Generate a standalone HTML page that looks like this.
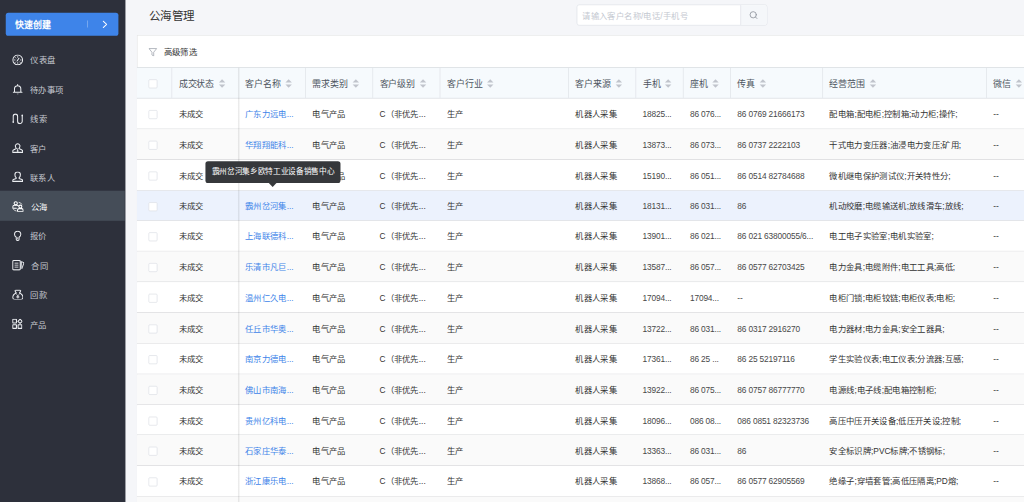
<!DOCTYPE html><html lang="zh-CN"><head><meta charset="utf-8"><title>公海管理</title><style>
*{box-sizing:border-box;margin:0;padding:0}
html,body{width:1024px;height:502px;overflow:hidden;background:#f5f6f9}
body{font-family:"Liberation Sans",sans-serif;font-size:13px;color:#333;position:relative}
#app{position:absolute;left:0;top:0;width:1600px;height:786px;transform:scale(0.64);transform-origin:0 0;background:#f5f6f9;overflow:hidden}
.sb{position:absolute;left:0;top:0;width:196px;height:786px;background:#2d303b}
.qc{position:absolute;left:9.4px;top:19.8px;width:175.400px;height:36.300px;border-radius:4px;background:#3e84e9;color:#fff;font-size:14px;font-weight:bold;line-height:36px;padding-left:13.500px;white-space:nowrap}
.qc i{position:absolute;left:127px;top:12.500px;width:1px;height:11px;background:rgba(255,255,255,.45)}
.qc svg{position:absolute;left:150.500px;top:12px}
.mi{position:absolute;left:0;width:195px;height:46.400px;color:#c6c9d0;font-size:13px;white-space:nowrap}
.mi.on{background:#454d58;color:#fff}
.mi .ic{position:absolute;left:0;top:1.300px;height:46.200px;display:flex;align-items:center;color:#eceef2}
.mi.on .ic{color:#fff}
.mi .tx{position:absolute;top:0;line-height:52.200px;height:46.200px}
.ttl{position:absolute;left:232.600px;top:0;height:52px;line-height:51.500px;font-size:18px;color:#333;white-space:nowrap}
.srch{position:absolute;left:900.600px;top:7.400px;width:298.600px;height:32.200px;border:1px solid #dcdfe6;border-radius:4px;background:#fff;overflow:hidden}
.srch .ph{position:absolute;left:8px;top:0;line-height:34px;font-size:13px;color:#c5c9d1;letter-spacing:.150px;white-space:nowrap}
.srch .btn{position:absolute;right:0;top:0;width:41.500px;height:30.200px;background:#f5f7fa;border-left:1px solid #dcdfe6}
.srch .btn svg{position:absolute;left:12.500px;top:8px}
.card{position:absolute;left:214.0px;top:55px;width:1420px;height:760px;background:#fff;border:1px solid #e6e6e6}
.flt{position:absolute;left:17.400px;top:0;height:49px;line-height:51.600px;font-size:13px;color:#333;white-space:nowrap}
.flt svg{position:absolute;left:0;top:18.600px}
.flt span{position:absolute;left:23.400px;top:0}
.tbl{position:absolute;left:214.0px;top:105.3px;width:1420px}
.tr{position:absolute;left:0;width:1420px;height:47.86px;background:#fff;border-bottom:1px solid #d3d4d7}
.tr.alt{background:#fafafa}
.tr.hov{background:#ecf2fd}
.th{position:absolute;left:0;top:0;width:1420px;height:48.64px;background:#f6fafd;border-top:1px solid #d3d7dc;border-bottom:1px solid #bcc1c8}
.c{position:absolute;top:0;height:100%;padding-left:10px;white-space:nowrap;overflow:hidden;line-height:50px}
.th .c{font-size:14px;color:#4d5560;line-height:51.400px;border-right:1px solid #dde1e7}
.c a{color:#3e84e9;text-decoration:none}
.c.n{letter-spacing:-.220px;color:#484848}
.cb{position:absolute;left:18px;width:14px;height:14px;border:1px solid #d9dce3;border-radius:2px;background:#fff}
.srt{display:inline-block;position:relative;width:10px;height:14px;margin-left:7px;vertical-align:middle;top:-1.500px}
.srt:before,.srt:after{content:"";position:absolute;left:0;border:5px solid transparent}
.srt:before{top:-5.200px;border-bottom-color:#c0c4cc}
.srt:after{top:7.500px;border-top-color:#c0c4cc}
.fx{position:absolute;left:157px;top:1px;width:4px;height:700px;background:linear-gradient(90deg,rgba(0,0,0,0),rgba(0,0,0,.085) 45%,rgba(0,0,0,.085) 55%,rgba(0,0,0,0))}
.tip{position:absolute;left:320.800px;top:252.400px;width:211.400px;height:33.200px;background:#36383b;border-radius:4px;color:#fff;font-size:12px;line-height:33.500px;text-align:center;white-space:nowrap}
.tip:after{content:"";position:absolute;left:99.500px;bottom:-6px;border:6px solid transparent;border-bottom-width:0;border-top-color:#36383b}
</style></head><body><div id="app">
<div class="ttl">公海管理</div>
<div class="srch"><div class="ph">请输入客户名称/电话/手机号</div><div class="btn"><svg viewBox="0 0 15 15" width="15" height="15" fill="none" stroke="#8b9099" stroke-width="1.250" stroke-linecap="round"><circle cx="6.900" cy="7.100" r="4.900"/><path d="M10.600 10.800 12.800 13"/></svg></div></div>
<div class="card"><div class="flt"><svg viewBox="0 0 14 14" width="13.600" height="13.600" fill="none" stroke="#9da2ab" stroke-width="1.200" stroke-linejoin="round"><path d="M.8.900h12.400L8.400 6.800v6.200l-2.800-1.800V6.800z"/></svg><span>高级筛选</span></div></div>
<div class="tbl">
<div class="th">
<div class="c" style="left:0px;width:55px"><div class="cb" style="top:17.400px"></div></div>
<div class="c" style="left:55px;width:104px;border-right:0">成交状态<span class="srt"></span></div>
<div class="c" style="left:159px;width:105px">客户名称<span class="srt"></span></div>
<div class="c" style="left:264px;width:105px">需求类别<span class="srt"></span></div>
<div class="c" style="left:369px;width:105px">客户级别<span class="srt"></span></div>
<div class="c" style="left:474px;width:201px">客户行业<span class="srt"></span></div>
<div class="c" style="left:675px;width:105px">客户来源<span class="srt"></span></div>
<div class="c" style="left:780px;width:74px">手机<span class="srt"></span></div>
<div class="c" style="left:854px;width:74px">座机<span class="srt"></span></div>
<div class="c" style="left:928px;width:144px">传真<span class="srt"></span></div>
<div class="c" style="left:1072px;width:256px">经营范围<span class="srt"></span></div>
<div class="c" style="left:1328px;width:105px">微信<span class="srt"></span></div>
</div>
<div class="tr" style="top:48.64px">
<div class="c" style="left:0px;width:55px"><div class="cb" style="top:18px"></div></div>
<div class="c" style="left:55px;width:104px">未成交</div>
<div class="c" style="left:159px;width:105px"><a>广东力远电...</a></div>
<div class="c" style="left:264px;width:105px">电气产品</div>
<div class="c" style="left:369px;width:105px">C（非优先...</div>
<div class="c" style="left:474px;width:201px">生产</div>
<div class="c" style="left:675px;width:105px">机器人采集</div>
<div class="c n" style="left:780px;width:74px">18825...</div>
<div class="c n" style="left:854px;width:74px">86 076...</div>
<div class="c n" style="left:928px;width:144px">86 0769 21666173</div>
<div class="c" style="left:1072px;width:256px">配电箱;配电柜;控制箱;动力柜;操作;</div>
<div class="c" style="left:1328px;width:105px">--</div>
</div>
<div class="tr alt" style="top:96.50px">
<div class="c" style="left:0px;width:55px"><div class="cb" style="top:18px"></div></div>
<div class="c" style="left:55px;width:104px">未成交</div>
<div class="c" style="left:159px;width:105px"><a>华翔翔能科...</a></div>
<div class="c" style="left:264px;width:105px">电气产品</div>
<div class="c" style="left:369px;width:105px">C（非优先...</div>
<div class="c" style="left:474px;width:201px">生产</div>
<div class="c" style="left:675px;width:105px">机器人采集</div>
<div class="c n" style="left:780px;width:74px">13873...</div>
<div class="c n" style="left:854px;width:74px">86 073...</div>
<div class="c n" style="left:928px;width:144px">86 0737 2222103</div>
<div class="c" style="left:1072px;width:256px">干式电力变压器;油浸电力变压;矿用;</div>
<div class="c" style="left:1328px;width:105px">--</div>
</div>
<div class="tr" style="top:144.36px">
<div class="c" style="left:0px;width:55px"><div class="cb" style="top:18px"></div></div>
<div class="c" style="left:55px;width:104px">未成交</div>
<div class="c" style="left:159px;width:105px"><a>扬州华电电...</a></div>
<div class="c" style="left:264px;width:105px">电气产品</div>
<div class="c" style="left:369px;width:105px">C（非优先...</div>
<div class="c" style="left:474px;width:201px">生产</div>
<div class="c" style="left:675px;width:105px">机器人采集</div>
<div class="c n" style="left:780px;width:74px">15190...</div>
<div class="c n" style="left:854px;width:74px">86 051...</div>
<div class="c n" style="left:928px;width:144px">86 0514 82784688</div>
<div class="c" style="left:1072px;width:256px">微机继电保护测试仪;开关特性分;</div>
<div class="c" style="left:1328px;width:105px">--</div>
</div>
<div class="tr hov" style="top:192.22px">
<div class="c" style="left:0px;width:55px"><div class="cb" style="top:18px"></div></div>
<div class="c" style="left:55px;width:104px">未成交</div>
<div class="c" style="left:159px;width:105px"><a>霸州岔河集...</a></div>
<div class="c" style="left:264px;width:105px">电气产品</div>
<div class="c" style="left:369px;width:105px">C（非优先...</div>
<div class="c" style="left:474px;width:201px">生产</div>
<div class="c" style="left:675px;width:105px">机器人采集</div>
<div class="c n" style="left:780px;width:74px">18131...</div>
<div class="c n" style="left:854px;width:74px">86 031...</div>
<div class="c n" style="left:928px;width:144px">86</div>
<div class="c" style="left:1072px;width:256px">机动绞磨;电缆输送机;放线滑车;放线;</div>
<div class="c" style="left:1328px;width:105px">--</div>
</div>
<div class="tr" style="top:240.08px">
<div class="c" style="left:0px;width:55px"><div class="cb" style="top:18px"></div></div>
<div class="c" style="left:55px;width:104px">未成交</div>
<div class="c" style="left:159px;width:105px"><a>上海联德科...</a></div>
<div class="c" style="left:264px;width:105px">电气产品</div>
<div class="c" style="left:369px;width:105px">C（非优先...</div>
<div class="c" style="left:474px;width:201px">生产</div>
<div class="c" style="left:675px;width:105px">机器人采集</div>
<div class="c n" style="left:780px;width:74px">13901...</div>
<div class="c n" style="left:854px;width:74px">86 021...</div>
<div class="c n" style="left:928px;width:144px">86 021 63800055/6...</div>
<div class="c" style="left:1072px;width:256px">电工电子实验室;电机实验室;</div>
<div class="c" style="left:1328px;width:105px">--</div>
</div>
<div class="tr alt" style="top:287.94px">
<div class="c" style="left:0px;width:55px"><div class="cb" style="top:18px"></div></div>
<div class="c" style="left:55px;width:104px">未成交</div>
<div class="c" style="left:159px;width:105px"><a>乐清市凡巨...</a></div>
<div class="c" style="left:264px;width:105px">电气产品</div>
<div class="c" style="left:369px;width:105px">C（非优先...</div>
<div class="c" style="left:474px;width:201px">生产</div>
<div class="c" style="left:675px;width:105px">机器人采集</div>
<div class="c n" style="left:780px;width:74px">13587...</div>
<div class="c n" style="left:854px;width:74px">86 057...</div>
<div class="c n" style="left:928px;width:144px">86 0577 62703425</div>
<div class="c" style="left:1072px;width:256px">电力金具;电缆附件;电工工具;高低;</div>
<div class="c" style="left:1328px;width:105px">--</div>
</div>
<div class="tr" style="top:335.80px">
<div class="c" style="left:0px;width:55px"><div class="cb" style="top:18px"></div></div>
<div class="c" style="left:55px;width:104px">未成交</div>
<div class="c" style="left:159px;width:105px"><a>温州仁久电...</a></div>
<div class="c" style="left:264px;width:105px">电气产品</div>
<div class="c" style="left:369px;width:105px">C（非优先...</div>
<div class="c" style="left:474px;width:201px">生产</div>
<div class="c" style="left:675px;width:105px">机器人采集</div>
<div class="c n" style="left:780px;width:74px">17094...</div>
<div class="c n" style="left:854px;width:74px">17094...</div>
<div class="c n" style="left:928px;width:144px">--</div>
<div class="c" style="left:1072px;width:256px">电柜门锁;电柜铰链;电柜仪表;电柜;</div>
<div class="c" style="left:1328px;width:105px">--</div>
</div>
<div class="tr alt" style="top:383.66px">
<div class="c" style="left:0px;width:55px"><div class="cb" style="top:18px"></div></div>
<div class="c" style="left:55px;width:104px">未成交</div>
<div class="c" style="left:159px;width:105px"><a>任丘市华奥...</a></div>
<div class="c" style="left:264px;width:105px">电气产品</div>
<div class="c" style="left:369px;width:105px">C（非优先...</div>
<div class="c" style="left:474px;width:201px">生产</div>
<div class="c" style="left:675px;width:105px">机器人采集</div>
<div class="c n" style="left:780px;width:74px">13722...</div>
<div class="c n" style="left:854px;width:74px">86 031...</div>
<div class="c n" style="left:928px;width:144px">86 0317 2916270</div>
<div class="c" style="left:1072px;width:256px">电力器材;电力金具;安全工器具;</div>
<div class="c" style="left:1328px;width:105px">--</div>
</div>
<div class="tr" style="top:431.52px">
<div class="c" style="left:0px;width:55px"><div class="cb" style="top:18px"></div></div>
<div class="c" style="left:55px;width:104px">未成交</div>
<div class="c" style="left:159px;width:105px"><a>南京力德电...</a></div>
<div class="c" style="left:264px;width:105px">电气产品</div>
<div class="c" style="left:369px;width:105px">C（非优先...</div>
<div class="c" style="left:474px;width:201px">生产</div>
<div class="c" style="left:675px;width:105px">机器人采集</div>
<div class="c n" style="left:780px;width:74px">17361...</div>
<div class="c n" style="left:854px;width:74px">86 25 ...</div>
<div class="c n" style="left:928px;width:144px">86 25 52197116</div>
<div class="c" style="left:1072px;width:256px">学生实验仪表;电工仪表;分流器;互感;</div>
<div class="c" style="left:1328px;width:105px">--</div>
</div>
<div class="tr alt" style="top:479.38px">
<div class="c" style="left:0px;width:55px"><div class="cb" style="top:18px"></div></div>
<div class="c" style="left:55px;width:104px">未成交</div>
<div class="c" style="left:159px;width:105px"><a>佛山市南海...</a></div>
<div class="c" style="left:264px;width:105px">电气产品</div>
<div class="c" style="left:369px;width:105px">C（非优先...</div>
<div class="c" style="left:474px;width:201px">生产</div>
<div class="c" style="left:675px;width:105px">机器人采集</div>
<div class="c n" style="left:780px;width:74px">13922...</div>
<div class="c n" style="left:854px;width:74px">86 075...</div>
<div class="c n" style="left:928px;width:144px">86 0757 86777770</div>
<div class="c" style="left:1072px;width:256px">电源线;电子线;配电箱控制柜;</div>
<div class="c" style="left:1328px;width:105px">--</div>
</div>
<div class="tr" style="top:527.24px">
<div class="c" style="left:0px;width:55px"><div class="cb" style="top:18px"></div></div>
<div class="c" style="left:55px;width:104px">未成交</div>
<div class="c" style="left:159px;width:105px"><a>贵州亿科电...</a></div>
<div class="c" style="left:264px;width:105px">电气产品</div>
<div class="c" style="left:369px;width:105px">C（非优先...</div>
<div class="c" style="left:474px;width:201px">生产</div>
<div class="c" style="left:675px;width:105px">机器人采集</div>
<div class="c n" style="left:780px;width:74px">18096...</div>
<div class="c n" style="left:854px;width:74px">086 08...</div>
<div class="c n" style="left:928px;width:144px">086 0851 82323736</div>
<div class="c" style="left:1072px;width:256px">高压中压开关设备;低压开关设;控制;</div>
<div class="c" style="left:1328px;width:105px">--</div>
</div>
<div class="tr alt" style="top:575.10px">
<div class="c" style="left:0px;width:55px"><div class="cb" style="top:18px"></div></div>
<div class="c" style="left:55px;width:104px">未成交</div>
<div class="c" style="left:159px;width:105px"><a>石家庄华泰...</a></div>
<div class="c" style="left:264px;width:105px">电气产品</div>
<div class="c" style="left:369px;width:105px">C（非优先...</div>
<div class="c" style="left:474px;width:201px">生产</div>
<div class="c" style="left:675px;width:105px">机器人采集</div>
<div class="c n" style="left:780px;width:74px">13363...</div>
<div class="c n" style="left:854px;width:74px">86 031...</div>
<div class="c n" style="left:928px;width:144px">86</div>
<div class="c" style="left:1072px;width:256px">安全标识牌;PVC标牌;不锈钢标;</div>
<div class="c" style="left:1328px;width:105px">--</div>
</div>
<div class="tr" style="top:622.96px">
<div class="c" style="left:0px;width:55px"><div class="cb" style="top:18px"></div></div>
<div class="c" style="left:55px;width:104px">未成交</div>
<div class="c" style="left:159px;width:105px"><a>浙江康乐电...</a></div>
<div class="c" style="left:264px;width:105px">电气产品</div>
<div class="c" style="left:369px;width:105px">C（非优先...</div>
<div class="c" style="left:474px;width:201px">生产</div>
<div class="c" style="left:675px;width:105px">机器人采集</div>
<div class="c n" style="left:780px;width:74px">13868...</div>
<div class="c n" style="left:854px;width:74px">86 057...</div>
<div class="c n" style="left:928px;width:144px">86 0577 62905569</div>
<div class="c" style="left:1072px;width:256px">绝缘子;穿墙套管;高低压隔离;PD熔;</div>
<div class="c" style="left:1328px;width:105px">--</div>
</div>
<div class="tr alt" style="top:670.82px">
<div class="c" style="left:0px;width:55px"><div class="cb" style="top:18px"></div></div>
<div class="c" style="left:55px;width:104px">未成交</div>
<div class="c" style="left:159px;width:105px"><a>天津市津开...</a></div>
<div class="c" style="left:264px;width:105px">电气产品</div>
<div class="c" style="left:369px;width:105px">C（非优先...</div>
<div class="c" style="left:474px;width:201px">生产</div>
<div class="c" style="left:675px;width:105px">机器人采集</div>
<div class="c n" style="left:780px;width:74px">13012...</div>
<div class="c n" style="left:854px;width:74px">86 022...</div>
<div class="c n" style="left:928px;width:144px">86 022 26993355</div>
<div class="c" style="left:1072px;width:256px">高低压成套设备;箱式变电站;</div>
<div class="c" style="left:1328px;width:105px">--</div>
</div>
<div class="fx"></div>
</div>
<div class="tip">霸州岔河集乡欧特工业设备销售中心</div>
<div class="sb">
<div class="qc">快速创建<i></i><svg viewBox="0 0 8 12" width="8" height="12" fill="none" stroke="#fff" stroke-width="1.600" stroke-linecap="round" stroke-linejoin="round"><path d="M1.200 1 6.600 6 1.200 11"/></svg></div>
<div class="mi" style="top:69.30px"><div class="ic" style="left:18.6px"><svg viewBox="0 0 18 18" width="17.4" height="17.4" fill="none" stroke="currentColor" stroke-width="1.650" stroke-linecap="round"><circle cx="9" cy="9" r="7.9"/><path d="M9 3.4v1.3M9 13.3v1.3M3.4 9h1.3M13.3 9h1.3M5 5l.9.9M12.1 12.1l.9.9M5 13l.9-.9" stroke-width="1.3"/><path d="M8.2 10.4 11 6.2" stroke-width="1.7"/></svg></div><div class="tx" style="left:47.2px">仪表盘</div></div>
<div class="mi" style="top:115.10px"><div class="ic" style="left:18.6px"><svg viewBox="-.900 0 17.800 17.600" width="17.200" height="17" fill="none" stroke="currentColor" stroke-width="1.650" stroke-linejoin="round" stroke-linecap="round"><path d="M8 1.2v1M2.9 13.2V8.1a5.1 5.1 0 0 1 10.2 0v5.1M1 13.6h14"/><path d="M6.4 15.9a1.7 1.7 0 0 0 3.2 0z" fill="currentColor" stroke="none"/></svg></div><div class="tx" style="left:47px">待办事项</div></div>
<div class="mi" style="top:160.90px"><div class="ic" style="left:18.6px"><svg viewBox="0 0 18 17.4" width="17.400" height="17.400" fill="none" stroke="currentColor" stroke-width="1.700" stroke-linecap="round"><path d="M1.700 13.400V4.600a3.550 3.550 0 0 1 7.100 0v8.100a3.750 3.750 0 0 0 7.500 0V3.600"/><circle cx="1.700" cy="13.900" r="1.350" fill="currentColor" stroke="none"/><circle cx="16.300" cy="3.100" r="1.350" fill="currentColor" stroke="none"/></svg></div><div class="tx" style="left:47.2px">线索</div></div>
<div class="mi" style="top:206.70px"><div class="ic" style="left:18.6px"><svg viewBox="0 0 17.2 16" width="17.2" height="16" fill="none" stroke="currentColor" stroke-width="1.650" stroke-linejoin="round"><path d="M5.6 7.4a3.6 3.6 0 1 1 6 0M5.6 7.4 6.6 9 1.9 11.4a1.7 1.7 0 0 0-1 1.5v2.2h15.4v-2.2a1.7 1.7 0 0 0-1-1.5L10.600 9l1-1.600"/><path d="M8.600 8.800 7.600 13.300 8.600 14.500 9.600 13.300z" fill="currentColor" stroke-width=".6"/></svg></div><div class="tx" style="left:47px">客户</div></div>
<div class="mi" style="top:252.50px"><div class="ic" style="left:18.6px"><svg viewBox="0 0 17.2 17.4" width="17.2" height="17.4" fill="none" stroke="currentColor" stroke-width="1.650" stroke-linejoin="round"><path d="M6.300 9.700C4.600 8.400 4.300 6.800 4.300 5.200a4.300 4.300 0 0 1 8.600 0c0 1.600-.3 3.200-2 4.500v1.400l4.300 1.500a1.700 1.700 0 0 1 1.100 1.600v1.500H.9v-1.500a1.700 1.700 0 0 1 1.100-1.600l4.300-1.500z"/><path d="M1 15.400h15.200" stroke-width="2.2"/></svg></div><div class="tx" style="left:47px">联系人</div></div>
<div class="mi on" style="top:298.30px"><div class="ic" style="left:18.6px"><svg viewBox="0 0 18.6 17.4" width="18.600" height="17.400" fill="none" stroke="currentColor" stroke-width="1.650" stroke-linejoin="round" stroke-linecap="round"><circle cx="5.600" cy="3.600" r="2.500"/><path d="M1 11.500V9.300a2.600 2.600 0 0 1 2.600-2.600h4a2.600 2.600 0 0 1 2.200 1.200M1 11.500h5.500"/><circle cx="12.800" cy="8.800" r="2.300"/><path d="M8.400 16.500v-2a2.500 2.500 0 0 1 2.500-2.500h3.800a2.500 2.500 0 0 1 2.500 2.500v2z"/><path d="M10.800 2.200a5 5 0 0 1 4.200 2.800M6.400 15.800a5 5 0 0 1-4.200-2.600" stroke-width="1.200"/></svg></div><div class="tx" style="left:48.4px">公海</div></div>
<div class="mi" style="top:344.10px"><div class="ic" style="left:18.6px"><svg viewBox="-2.800 -.400 17.200 16.200" width="17.200" height="16.200" fill="none" stroke="currentColor" stroke-width="1.600" stroke-linejoin="round"><path d="M3.600 10.300C1.800 9.300.900 7.700.900 5.800a4.900 4.900 0 0 1 9.800 0c0 1.900-.9 3.500-2.700 4.500v3.300a1.700 1.700 0 0 1-1.700 1.700h-1a1.700 1.700 0 0 1-1.700-1.700z"/><path d="M5.800 10.400v3.400" stroke-width="1.300"/></svg></div><div class="tx" style="left:47px">报价</div></div>
<div class="mi" style="top:389.90px"><div class="ic" style="left:18.6px"><svg viewBox="0 0 19.4 16.6" width="19.400" height="16.600" fill="none" stroke="currentColor" stroke-width="1.650" stroke-linejoin="round"><rect x=".9" y=".9" width="11.800" height="14.800" rx="1.500"/><path d="M3.800 5.200h6M3.800 8.300h6M3.800 11.400h6" stroke-width="1.300"/><path d="M14.500 2.700 18.500 4.600 15.200 13.700 14 11.700z" stroke-linejoin="miter" stroke-width="1.500"/></svg></div><div class="tx" style="left:49.2px">合同</div></div>
<div class="mi" style="top:435.70px"><div class="ic" style="left:18.6px"><svg viewBox="0 -.600 17.800 16.200" width="17.800" height="16.200" fill="none" stroke="currentColor" stroke-width="1.650" stroke-linejoin="round" stroke-linecap="round"><path d="M6.200 5.200 4.600 2.200c-.3-.7.100-1.300.9-1.300h6.800c.8 0 1.200.6.900 1.300L11.600 5.200"/><path d="M6.200 5.200C3 6.600.9 9.600.9 12.400c0 1.900 1.100 2.900 2.900 2.900h10.200c1.800 0 2.900-1 2.900-2.900 0-2.800-2.100-5.800-5.300-7.200"/><path d="M7.200 7.600 8.900 9.800 10.600 7.600M8.900 9.800v3.600M7.300 10.600h3.200M7.300 12h3.200" stroke-width="1.100"/></svg></div><div class="tx" style="left:47.6px">回款</div></div>
<div class="mi" style="top:481.50px"><div class="ic" style="left:18.6px"><svg viewBox="0 0 16.8 16" width="16.800" height="16" fill="none" stroke="currentColor" stroke-width="1.650" stroke-linejoin="round"><rect x=".9" y=".9" width="5.800" height="5.800" rx=".4"/><rect x=".9" y="9.300" width="5.800" height="5.800" rx=".4"/><rect x="9.300" y="9.300" width="5.800" height="5.800" rx=".4"/><path d="M12.400.8 15.800 4.100 12.400 7.400 9 4.100z"/></svg></div><div class="tx" style="left:46.6px">产品</div></div>
</div>
</div></body></html>
